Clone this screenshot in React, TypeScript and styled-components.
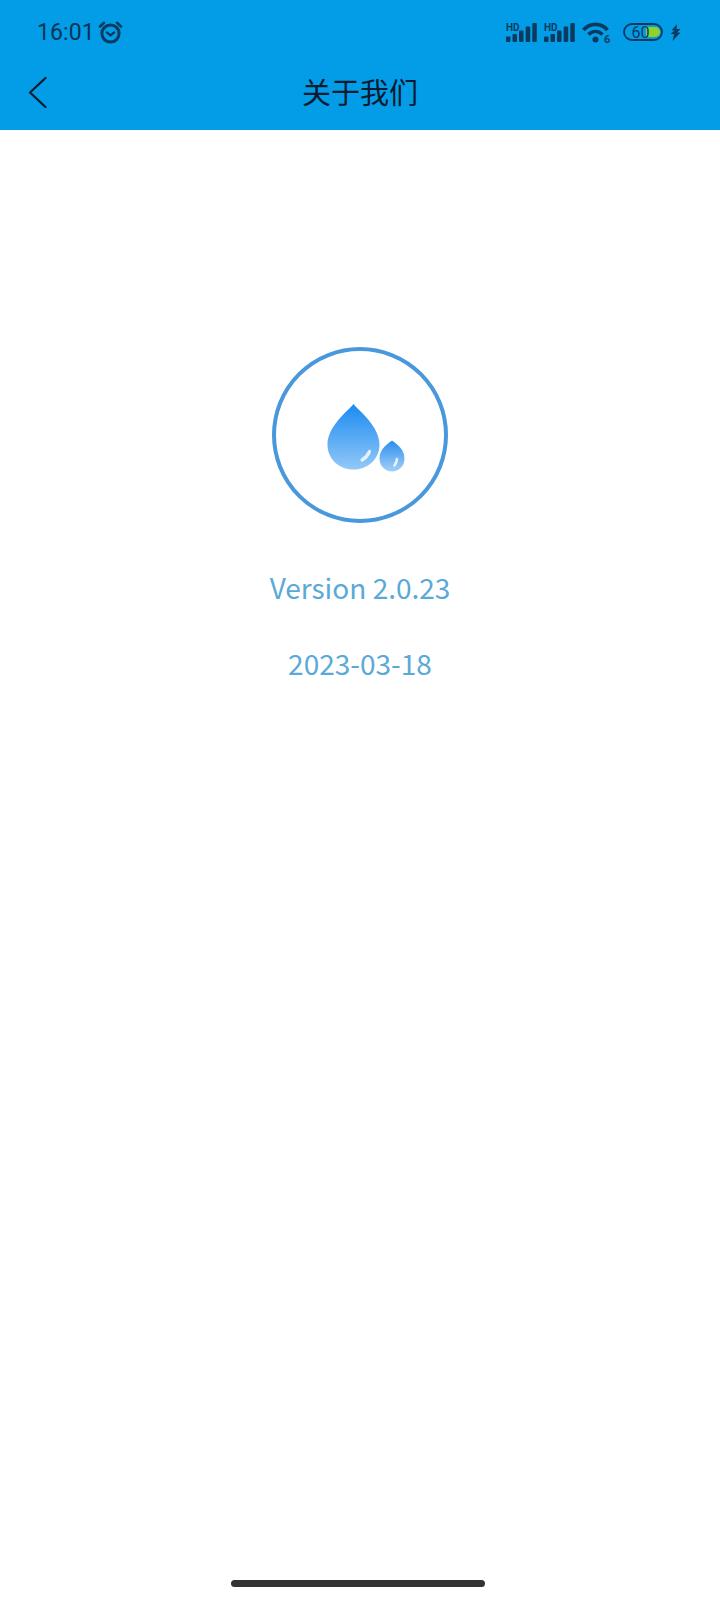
import React from "react";
import styled, { createGlobalStyle } from "styled-components";

const Global = createGlobalStyle`
  html, body { margin: 0; padding: 0; background: #fff; }
  body { font-family: "Noto Sans CJK SC", "Noto Sans", sans-serif; }
`;

const Page = styled.div`
  width: 720px;
  height: 1600px;
  display: flex;
  flex-direction: column;
  background: #fff;
  overflow: hidden;
`;

const Header = styled.header`
  background: #029de6;
  height: 130px;
  display: flex;
  flex-direction: column;
  flex-shrink: 0;
`;

const StatusBar = styled.div`
  height: 64px;
  padding: 0 39px 0 37px;
  display: flex;
  align-items: center;
  justify-content: space-between;
  color: #0c3a5e;
`;

const StatusGroup = styled.div`
  display: flex;
  align-items: center;
  gap: ${(p: { $gap: number }) => p.$gap}px;
`;

const WifiSlot = styled.div`
  display: flex;
  margin: 3px 4px 0 0;
`;

const Clock = styled.span`
  font-family: Roboto, "Noto Sans", sans-serif;
  font-size: 23px;
  line-height: 1;
  letter-spacing: 0.1px;
  color: #0b3557;
`;

const TitleBar = styled.div`
  flex: 1;
  display: grid;
  grid-template-columns: 100px 1fr 100px;
  align-items: center;
  padding-bottom: 12px;
`;

const BackButton = styled.div`
  display: flex;
  align-items: center;
  padding: 2px 0 0 28px;
`;

const Title = styled.h1`
  margin: 0;
  text-align: center;
  font-weight: 400;
  font-size: 29px;
  line-height: 40px;
  color: #0a1a30;
`;

const Content = styled.main`
  flex: 1;
  display: flex;
  flex-direction: column;
  align-items: center;
  padding-top: 217px;
`;

const LogoCircle = styled.div`
  width: 176px;
  height: 176px;
  box-sizing: border-box;
  border: 4px solid #4a98dc;
  border-radius: 50%;
  display: flex;
  align-items: center;
  justify-content: center;
`;

const DropsMark = styled.svg`
  margin: 8px 0 0 18px;
`;

const InfoLine = styled.p`
  margin: ${(p: { $top: number }) => p.$top}px 0 0;
  font-size: 28px;
  line-height: 42px;
  color: #5aa9d6;
`;

const HomeArea = styled.div`
  height: 20px;
  padding-right: 4px;
  display: flex;
  justify-content: center;
  flex-shrink: 0;
`;

const HomeBar = styled.div`
  width: 254px;
  height: 7px;
  border-radius: 4px;
  background: #333;
`;

const Alarm = () => (
  <svg width="25" height="25" viewBox="0 0 25 25" fill="none" stroke="#0c3a5e" strokeLinecap="round">
    <circle cx="12.5" cy="13.5" r="8.6" strokeWidth="3" />
    <path d="M8.8 12.4l3.7 3 3.7-3" strokeWidth="2.4" strokeLinejoin="round" />
    <path d="M2 6.5 6 2.8M23 6.5 19 2.8" strokeWidth="2.6" />
  </svg>
);

const Signal = () => (
  <svg width="31" height="20" viewBox="0 0 31 20" fill="#0c3a5e">
    <rect x="0" y="14.5" width="4.5" height="5.5" rx="1" />
    <rect x="6.5" y="12" width="4.5" height="8" rx="1" />
    <rect x="13" y="8.5" width="4.5" height="11.5" rx="1" />
    <rect x="19.7" y="4.5" width="4.5" height="15.5" rx="1" />
    <rect x="26.3" y="1" width="4.5" height="19" rx="1" />
    <text x="0" y="8.5" fontSize="10" fontWeight="700" fontFamily="Roboto, sans-serif">HD</text>
  </svg>
);

const Wifi = () => (
  <svg width="30" height="24" viewBox="0 0 30 24" fill="none" stroke="#0c3a5e" strokeLinecap="butt">
    <path d="M1.5 8C8 0.5 19 0.5 25.5 8" strokeWidth="3.6" />
    <path d="M6.5 12.5C10.5 8.5 16 8.5 20.5 12.5" strokeWidth="3.6" />
    <circle cx="13.5" cy="17.5" r="3" fill="#0c3a5e" stroke="none" />
    <text x="22" y="20.5" fontSize="11" fontWeight="700" fontFamily="Roboto, sans-serif" fill="#0c3a5e" stroke="none">6</text>
  </svg>
);

const Battery = () => (
  <svg width="40" height="18" viewBox="0 0 40 18">
    <path d="M23 4H32A5 5 0 0 1 32 14H23Z" fill="#8fd32a" />
    <rect x="1" y="1" width="38" height="16" rx="8" fill="none" stroke="#0c3a5e" strokeWidth="1.8" />
    <text x="8.5" y="15" fontSize="16" fontFamily="Roboto, sans-serif" fill="#0c3a5e">60</text>
  </svg>
);

const Bolt = () => (
  <svg width="11" height="17" viewBox="0 0 11 17" fill="#0c3a5e">
    <path d="M7 0 1.5 6.5h3.2L0.5 10h3.5L2.5 17 10.5 8.5H7L10.5 5H6.5Z" />
  </svg>
);

const Back = () => (
  <svg width="20" height="32" viewBox="0 0 20 32" fill="none" stroke="#0a1a30" strokeWidth="2.2" strokeLinecap="round" strokeLinejoin="round">
    <path d="M17.5 2 2 16.5 17.5 31" />
  </svg>
);

const Drops = () => (
  <DropsMark width="84" height="72" viewBox="0 0 84 72">
    <defs>
      <linearGradient id="bigDrop" x1="0" y1="0" x2="0" y2="1">
        <stop offset="0" stopColor="#1b8bf0" />
        <stop offset="1" stopColor="#93c8f8" />
      </linearGradient>
      <linearGradient id="smallDrop" x1="0" y1="0" x2="0" y2="1">
        <stop offset="0" stopColor="#2a8eee" />
        <stop offset="1" stopColor="#a3d0f8" />
      </linearGradient>
    </defs>
    <path d="M26.5 1C22 7 0.5 23 0.5 41.5C0.5 56 12 66.5 26.5 66.5C41 66.5 52.5 56 52.5 41.5C52.5 23 31 7 26.5 1Z" fill="url(#bigDrop)" />
    <path d="M35 57C38.5 55 41 52 42.5 48.5" stroke="#fff" strokeWidth="3.2" strokeLinecap="round" fill="none" opacity="0.8" />
    <path d="M65 37.5C61 40.5 52.5 45.5 52.5 55.5C52.5 63 58 68.5 65 68.5C72 68.5 77.5 63 77.5 55.5C77.5 45.5 69 40.5 65 37.5Z" fill="url(#smallDrop)" />
    <path d="M67.5 62.5C69 60.5 69.8 58 70 56" stroke="#fff" strokeWidth="2.6" strokeLinecap="round" fill="none" opacity="0.8" />
  </DropsMark>
);

export default function App() {
  return (
    <Page>
      <Global />
      <Header>
        <StatusBar>
          <StatusGroup $gap={3}>
            <Clock>16:01</Clock>
            <Alarm />
          </StatusGroup>
          <StatusGroup $gap={7}>
            <Signal />
            <Signal />
            <WifiSlot>
              <Wifi />
            </WifiSlot>
            <Battery />
            <Bolt />
          </StatusGroup>
        </StatusBar>
        <TitleBar>
          <BackButton>
            <Back />
          </BackButton>
          <Title>关于我们</Title>
          <span />
        </TitleBar>
      </Header>
      <Content>
        <LogoCircle>
          <Drops />
        </LogoCircle>
        <InfoLine $top={43}>Version 2.0.23</InfoLine>
        <InfoLine $top={34}>2023-03-18</InfoLine>
      </Content>
      <HomeArea>
        <HomeBar />
      </HomeArea>
    </Page>
  );
}
